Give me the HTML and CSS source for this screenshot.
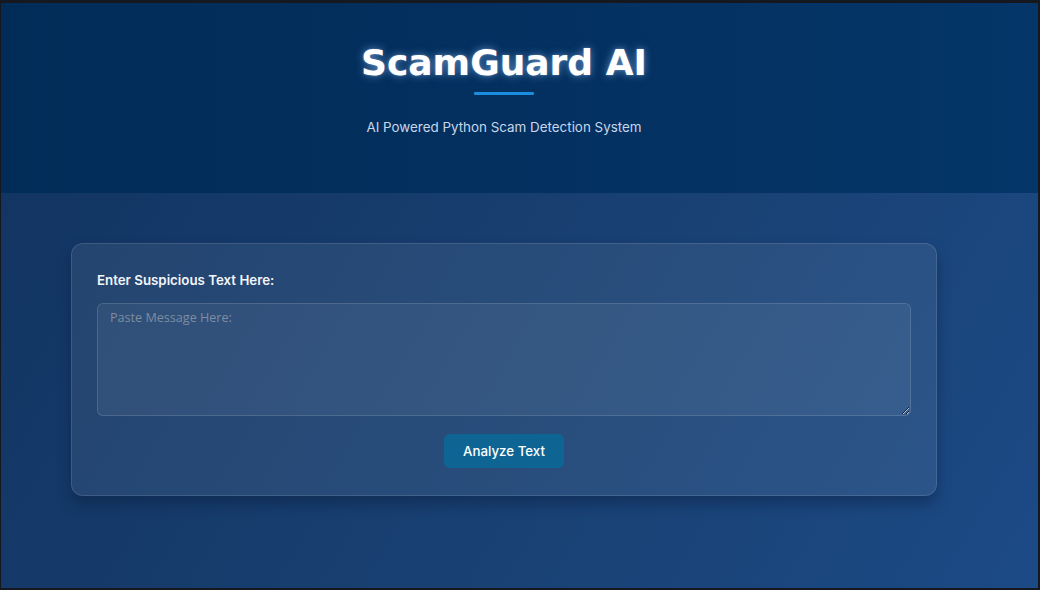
FILE: index.html
```html
<!DOCTYPE html>
<html lang="en">
<head>
<meta charset="utf-8">
<title>ScamGuard AI</title>
<link rel="stylesheet" href="styles.css">
</head>
<body>
<div class="frame">
  <header class="hero">
    <div class="hero-inner">
      <h1 class="title">ScamGuard AI</h1>
      <div class="title-line"></div>
      <p class="subtitle">AI Powered Python Scam Detection System</p>
    </div>
  </header>
  <main class="main">
    <div class="main-inner">
      <section class="card">
        <label class="label" for="msg">Enter Suspicious Text Here:</label>
        <textarea id="msg" class="input" placeholder="Paste Message Here:"></textarea>
        <div class="actions">
          <button class="btn" type="button">Analyze Text</button>
        </div>
      </section>
    </div>
  </main>
</div>
</body>
</html>
```
FILE: styles.css
```css
* { box-sizing: border-box; }
html, body { margin: 0; height: 100%; }
body {
  background: #15181e;
  padding: 3px 2px 2px 1px;
  font-family: "Inter", "Liberation Sans", sans-serif;
}
.frame {
  height: 100%;
  display: flex;
  flex-direction: column;
  background: linear-gradient(120deg, #113360 0%, #183f70 50%, #1c4a85 100%);
  overflow: hidden;
}
.hero {
  height: 190px;
  flex: none;
  background: linear-gradient(90deg, #022c58 0%, #03305f 50%, #053669 100%);
}
.hero-inner {
  width: 1006px;
  display: flex;
  flex-direction: column;
  align-items: center;
  padding-top: 37px;
}
.title {
  margin: 0;
  font-family: "DejaVu Sans", sans-serif;
  font-weight: 700;
  font-size: 36px;
  line-height: 46px;
  color: #ffffff;
  letter-spacing: 0;
  text-shadow: 0 0 9px rgba(150, 195, 255, 0.6), 0 0 2px rgba(255,255,255,0.3);
}
.title-line {
  width: 60px;
  height: 3px;
  background: #1a8de0;
  margin-top: 6px;
  border-radius: 1px;
}
.subtitle {
  margin: 22px 0 0;
  font-size: 13.4px;
  line-height: 20px;
  color: #c8d7ec;
}
.main { flex: 1; }
.main-inner {
  width: 1006px;
  padding: 50px 70px 0;
}
.card {
  background: rgba(255, 255, 255, 0.07);
  border: 1px solid rgba(255, 255, 255, 0.12);
  border-radius: 12px;
  padding: 26px 25px 27px;
  display: flex;
  flex-direction: column;
  box-shadow: 0 8px 14px rgba(5, 20, 50, 0.35);
}
.label {
  font-size: 13.3px;
  font-weight: 600;
  line-height: 20px;
  color: #f2f5fa;
}
.input {
  margin-top: 13px;
  height: 113px;
  width: 100%;
  resize: vertical;
  background: rgba(255, 255, 255, 0.06);
  border: 1px solid rgba(255, 255, 255, 0.13);
  border-radius: 6px;
  padding: 5px 12px;
  font-family: "Open Sans", sans-serif;
  font-size: 12.6px;
  color: #e8eef7;
  outline: none;
}
.input::placeholder { color: #7f8da0; }
.actions {
  display: flex;
  justify-content: center;
  margin-top: 18px;
}
.btn {
  width: 120px;
  height: 34px;
  background: #0e6594;
  color: #ffffff;
  border: none;
  border-radius: 6px;
  font-family: "Inter", sans-serif;
  font-weight: 500;
  font-size: 13.3px;
}
```
